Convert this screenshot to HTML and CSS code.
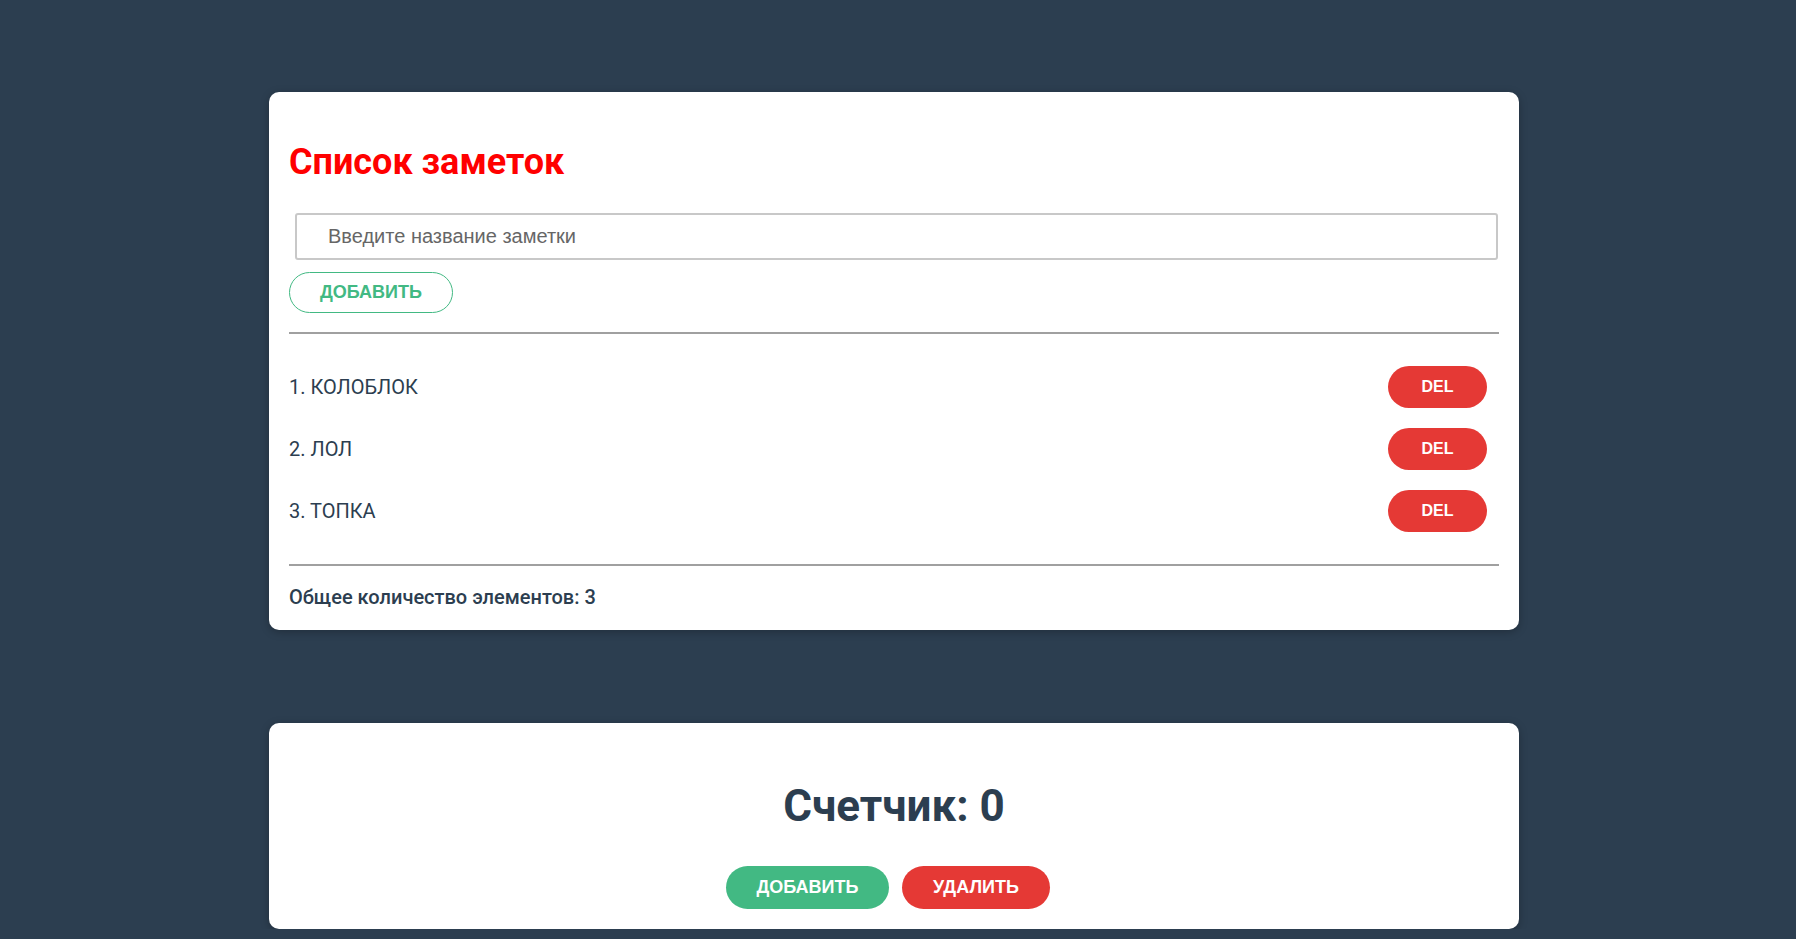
FILE: index.html
```html
<!DOCTYPE html>
<html lang="ru">
<head>
<meta charset="utf-8">
<title>Список заметок</title>
<link rel="stylesheet" href="styles.css">
</head>
<body>
<div class="page">
  <section class="card notes">
    <h1 class="notes-title">Список заметок</h1>
    <input class="note-input" type="text" placeholder="Введите название заметки">
    <button class="btn btn-outline">ДОБАВИТЬ</button>
    <hr class="sep sep-top">
    <ul class="note-list">
      <li class="note-item"><span class="note-text">1. КОЛОБЛОК</span><button class="btn btn-red btn-del">DEL</button></li>
      <li class="note-item"><span class="note-text">2. ЛОЛ</span><button class="btn btn-red btn-del">DEL</button></li>
      <li class="note-item"><span class="note-text">3. ТОПКА</span><button class="btn btn-red btn-del">DEL</button></li>
    </ul>
    <hr class="sep sep-bottom">
    <p class="total">Общее количество элементов: 3</p>
  </section>
  <section class="card counter">
    <h2 class="counter-title">Счетчик: 0</h2>
    <div class="counter-actions">
      <button class="btn btn-green btn-big">ДОБАВИТЬ</button>
      <button class="btn btn-red btn-big btn-remove">УДАЛИТЬ</button>
    </div>
  </section>
</div>
</body>
</html>
```

FILE: styles.css
```css
html, body {
  margin: 0;
  padding: 0;
  background: #2c3e50;
}
body {
  font-family: Roboto, "Liberation Sans", Arial, sans-serif;
  color: #2c3e50;
}
.page {
  padding: 92px 8px 0 0;
  display: flex;
  flex-direction: column;
  align-items: center;
  gap: 93px;
}
.card {
  box-sizing: border-box;
  width: 1250px;
  background: #fff;
  border-radius: 10px;
  box-shadow: 0 2px 8px rgba(0, 0, 0, 0.25);
}
.notes {
  padding: 20px 20px 21px 20px;
  display: flex;
  flex-direction: column;
  align-items: flex-start;
}
.notes-title {
  margin: 29px 0 30px 0;
  font-size: 36px;
  line-height: 42px;
  font-weight: 700;
  color: #ff0000;
}
.note-input {
  box-sizing: border-box;
  margin: 0 0 0 6px;
  width: 1203px;
  height: 47px;
  border: 2px solid #c8c8c8;
  border-radius: 3px;
  padding: 0 0 0 31px;
  font-family: "Liberation Sans", Arial, sans-serif;
  font-size: 20px;
  color: #333;
  outline: none;
}
.note-input::placeholder {
  color: #666;
}
.btn {
  font-family: "Liberation Sans", Arial, sans-serif;
  font-weight: 700;
  border-radius: 999px;
  cursor: pointer;
  box-sizing: border-box;
  display: inline-flex;
  align-items: center;
  justify-content: center;
  padding: 0;
}
.btn-outline {
  margin-top: 12px;
  width: 164px;
  height: 41px;
  background: #fff;
  border: 1px solid #42b983;
  color: #42b983;
  font-size: 18px;
}
.sep {
  align-self: stretch;
  margin: 0;
  border: 0;
  border-top: 2px solid #a0a0a0;
  height: 0;
}
.sep-top {
  margin-top: 19px;
}
.note-list {
  list-style: none;
  margin: 22px 0 0 0;
  padding: 0;
  align-self: stretch;
}
.note-item {
  display: flex;
  align-items: center;
  justify-content: space-between;
  padding: 10px 12px 10px 0;
  height: 42px;
}
.note-text {
  font-size: 20px;
  color: #2c3e50;
}
.btn-red {
  background: #e53935;
  border: 0;
  color: #fff;
}
.btn-del {
  width: 99px;
  height: 42px;
  font-size: 16px;
}
.sep-bottom {
  margin-top: 22px;
}
.total {
  margin: 20px 0 0 0;
  font-size: 20px;
  line-height: 23px;
  font-weight: 500;
}
.counter {
  padding: 57px 20px 20px;
  display: flex;
  flex-direction: column;
  align-items: center;
}
.counter-title {
  margin: 0;
  font-size: 44px;
  line-height: 52px;
  font-weight: 700;
  color: #2c3e50;
}
.counter-actions {
  margin: 34px 12px 0 0;
  display: flex;
  gap: 13px;
}
.btn-big {
  height: 43px;
  font-size: 18px;
}
.btn-green {
  width: 163px;
  background: #42b983;
  border: 0;
  color: #fff;
}
.btn-remove {
  width: 148px;
}
```
